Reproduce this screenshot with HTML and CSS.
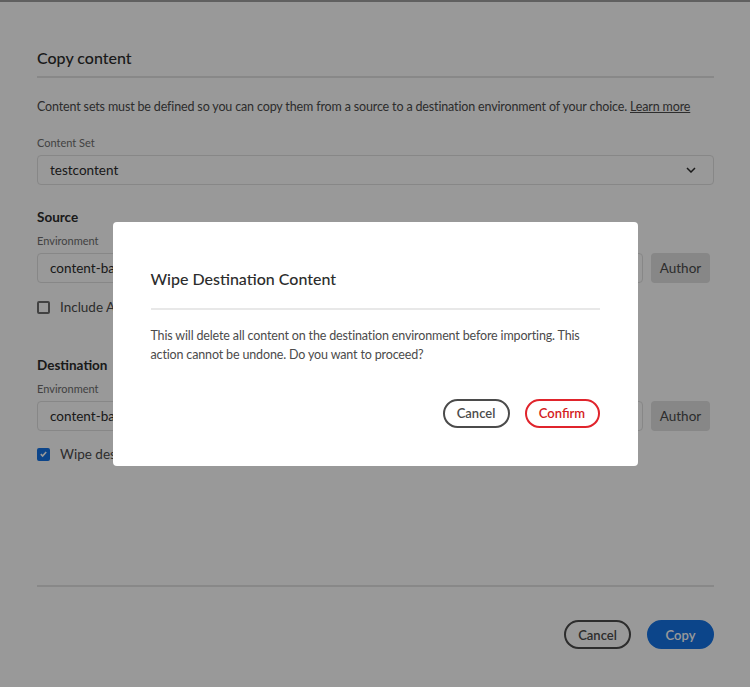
FILE: index.html
```html
<!DOCTYPE html>
<html lang="en">
<head>
  <meta charset="UTF-8" />
  <meta name="viewport" content="width=device-width, initial-scale=1.0" />
  <title>Copy content</title>
  <link rel="stylesheet" href="styles.css">
</head>
<body>
  <div class="page">
    <h2 class="page-title">Copy content</h2>
    <div class="divider"></div>
    <p class="intro">Content sets must be defined so you can copy them from a source to a destination environment of your choice. <a href="#">Learn more</a></p>

    <div class="field-label first">Content Set</div>
    <div class="select">
      <span>testcontent</span>
      <svg class="chevron" viewBox="0 0 10 6"><path d="M1 1l4 4 4-4" /></svg>
    </div>

    <div class="section-title">Source</div>
    <div class="field-label">Environment</div>
    <div class="env-row">
      <div class="input">content-backup-stage</div>
      <div class="tier-btn">Author</div>
    </div>
    <label class="check-row">
      <span class="box"></span>
      <span>Include Access Control Lists</span>
    </label>

    <div class="section-title dest">Destination</div>
    <div class="field-label">Environment</div>
    <div class="env-row">
      <div class="input">content-backup-dev</div>
      <div class="tier-btn">Author</div>
    </div>
    <label class="check-row second">
      <span class="box checked">
        <svg viewBox="0 0 10 10"><path d="M2 5.2l2 2 4-4.4" /></svg>
      </span>
      <span>Wipe destination content</span>
    </label>

    <div class="footer">
      <div class="divider"></div>
      <div class="actions">
        <button class="btn btn-outline">Cancel</button>
        <button class="btn btn-primary">Copy</button>
      </div>
    </div>
  </div>

  <div class="overlay">
    <div class="modal">
      <h3 class="modal-title">Wipe Destination Content</h3>
      <div class="modal-divider"></div>
      <p class="modal-text">This will delete all content on the destination environment before importing. This action cannot be undone. Do you want to proceed?</p>
      <div class="modal-actions">
        <button class="btn btn-outline">Cancel</button>
        <button class="btn btn-danger">Confirm</button>
      </div>
    </div>
  </div>
</body>
</html>
```

FILE: styles.css
```css
* { box-sizing: border-box; margin: 0; padding: 0; }

body {
  font-family: Lato, 'Noto Sans', sans-serif;
  background-color: #fff;
  color: #2c2c2c;
  height: 100vh;
  overflow: hidden;
}

.page {
  height: 100vh;
  display: flex;
  flex-direction: column;
  padding: 46px 36px 38px 37px;
  border-top: 2px solid #a0a0a0;
}

.page-title {
  font-size: 16px;
  font-weight: 500;
  line-height: 24px;
  margin-top: -2px;
}

.divider {
  height: 2px;
  background-color: #e3e3e3;
  margin-top: 6px;
}

.intro {
  font-size: 12.5px;
  letter-spacing: -0.15px;
  line-height: 20px;
  color: #4b4b4b;
  margin-top: 19px;
}

.intro a {
  color: #4b4b4b;
}

.field-label {
  font-size: 11px;
  line-height: 16px;
  color: #6e6e6e;
  margin-top: 6px;
  margin-bottom: 4px;
}

.field-label.first {
  margin-top: 18px;
}

.select, .input {
  height: 30px;
  border: 1px solid #e1e1e1;
  border-radius: 4px;
  padding: 0 12px;
  font-size: 13.5px;
  display: flex;
  align-items: center;
  color: #2c2c2c;
}

.select {
  justify-content: space-between;
}

.chevron {
  width: 10px;
  height: 6px;
  fill: none;
  stroke: #2c2c2c;
  stroke-width: 1.5;
  margin-right: 5px;
}

.section-title {
  font-size: 13.5px;
  font-weight: 700;
  line-height: 20px;
  margin-top: 22px;
}

.section-title.dest {
  margin-top: 38px;
}

.env-row {
  display: flex;
  gap: 8px;
  padding-right: 4px;
}

.env-row .input {
  flex: 1;
}

.tier-btn {
  width: 59px;
  height: 30px;
  background-color: #e1e1e1;
  border-radius: 4px;
  font-size: 13.5px;
  color: #4b4b4b;
  display: flex;
  align-items: center;
  justify-content: center;
}

.check-row {
  display: flex;
  align-items: center;
  gap: 10px;
  font-size: 13.5px;
  line-height: 20px;
  color: #4b4b4b;
  margin-top: 14px;
}

.check-row.second {
  margin-top: 13px;
}

.box {
  width: 13px;
  height: 13px;
  border: 2px solid #6e6e6e;
  border-radius: 2px;
  display: flex;
  align-items: center;
  justify-content: center;
}

.box.checked {
  background-color: #1473e6;
  border-color: #1473e6;
}

.box svg {
  width: 10px;
  height: 10px;
  fill: none;
  stroke: #fff;
  stroke-width: 1.8;
}

.footer {
  margin-top: auto;
}

.actions {
  display: flex;
  justify-content: flex-end;
  gap: 16px;
  margin-top: 33px;
}

.btn {
  height: 29px;
  border-radius: 15px;
  font-family: inherit;
  font-size: 13px;
  font-weight: 600;
  padding: 0;
  background: transparent;
  cursor: pointer;
}

.btn-outline {
  border: 2px solid #4b4b4b;
  color: #4b4b4b;
  width: 67px;
}

.btn-primary {
  border: 2px solid #1473e6;
  background-color: #1473e6;
  color: #fff;
  width: 67px;
}

.btn-danger {
  border: 2px solid #e0242c;
  color: #d41a22;
  width: 75px;
}

.overlay {
  position: fixed;
  top: 0; left: 0;
  width: 100%; height: 100%;
  background: rgba(0, 0, 0, 0.4);
  display: flex;
  justify-content: center;
  align-items: center;
}

.modal {
  background: #fff;
  width: 525px;
  border-radius: 4px;
  padding: 45px 38px 38px;
}

.modal-title {
  font-size: 16px;
  font-weight: 500;
  line-height: 24px;
  color: #2c2c2c;
}

.modal-divider {
  height: 2px;
  background-color: #e8e8e8;
  margin-top: 17px;
}

.modal-text {
  font-size: 12.5px;
  letter-spacing: -0.15px;
  line-height: 19px;
  color: #4b4b4b;
  margin-top: 16px;
}

.modal-actions {
  display: flex;
  justify-content: flex-end;
  gap: 15px;
  margin-top: 35px;
}
```
